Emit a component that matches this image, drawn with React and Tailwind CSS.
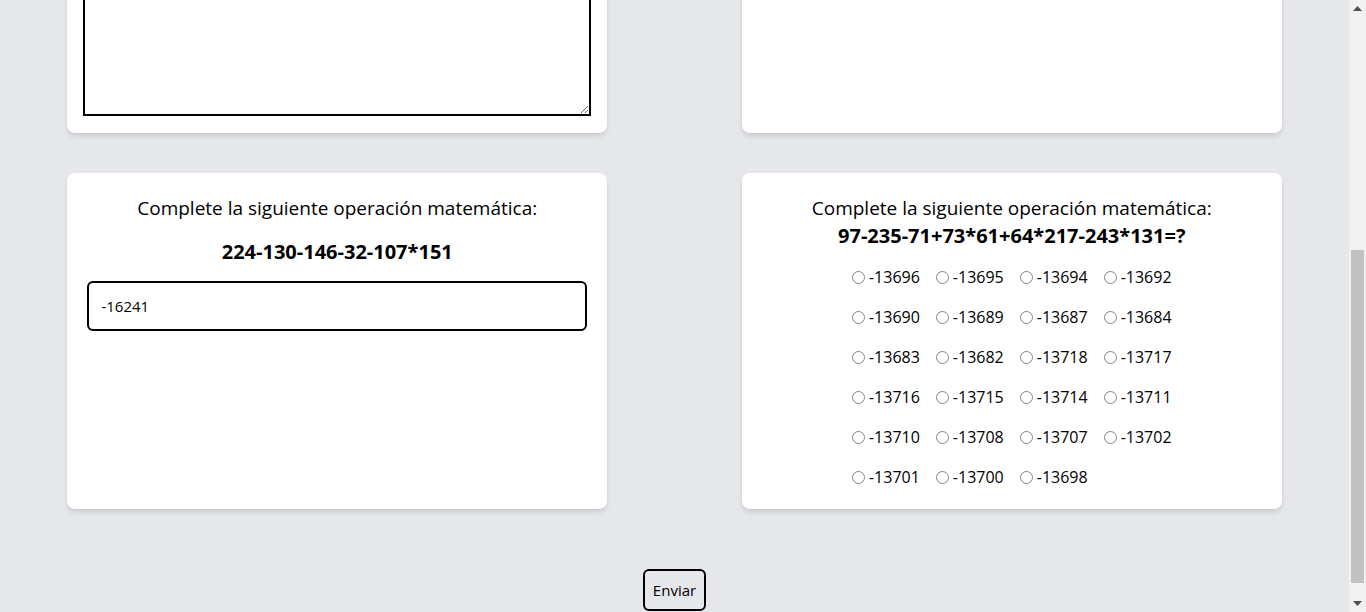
import React from 'react';

const options = [
  '-13696', '-13695', '-13694', '-13692',
  '-13690', '-13689', '-13687', '-13684',
  '-13683', '-13682', '-13718', '-13717',
  '-13716', '-13715', '-13714', '-13711',
  '-13710', '-13708', '-13707', '-13702',
  '-13701', '-13700', '-13698',
];

const Card = ({ className = '', children }) => (
  <div className={`w-2/5 bg-white rounded-lg shadow-md ${className}`}>{children}</div>
);

// window scrollbar, drawn since the page is shown scrolled
const Scrollbar = () => (
  <div className="w-[17px] h-[612px] flex flex-col bg-[#f1f1f1] shrink-0">
    <div className="h-[17px] flex items-center justify-center">
      <svg width="9" height="5" viewBox="0 0 9 5"><path d="M0 5 L4.5 0 L9 5 Z" fill="#505050" /></svg>
    </div>
    <div className="flex-1 pt-[233px]">
      <div className="h-[333px] mx-[2px] bg-[#c1c1c1]" />
    </div>
    <div className="h-[17px] flex items-center justify-center">
      <svg width="9" height="5" viewBox="0 0 9 5"><path d="M0 0 L9 0 L4.5 5 Z" fill="#505050" /></svg>
    </div>
  </div>
);

export default function App() {
  return (
    <div className="flex h-[612px] bg-[#e5e7eb] text-black font-['Open_Sans',sans-serif]">
      <div
        ref={(el) => {
          if (el) el.scrollTop = 428;
        }}
        className="flex-1 h-[612px] overflow-hidden"
      >
        <div className="flex flex-col pt-10 pb-[22px]">
          <div className="flex justify-around">
            <Card className="h-[521px] flex flex-col p-4 pt-12 pb-[17px]">
              <textarea className="flex-1 block w-full border-2 border-black resize-y" />
            </Card>
            <Card className="h-[521px] p-5" />
          </div>

          <div className="flex justify-around mt-10">
            <Card className="p-5 pt-[21px]">
              <h2 className="text-[19px] text-center leading-7">Complete la siguiente operación matemática:</h2>
              <p className="text-xl font-bold text-center leading-7 mt-4">224-130-146-32-107*151</p>
              <input
                type="text"
                defaultValue="-16241"
                className="mt-[15px] w-full h-[50px] border-2 border-black rounded-md px-3 text-[15px] outline-none"
              />
            </Card>
            <Card className="p-5 pt-[21px]">
              <h2 className="text-[19px] text-center leading-7">Complete la siguiente operación matemática:</h2>
              <p className="text-xl font-bold text-center leading-7">97-235-71+73*61+64*217-243*131=?</p>
              <div className="grid grid-cols-4 gap-x-4 gap-y-4 w-fit mx-auto mt-[15px]">
                {options.map((opt) => (
                  <label key={opt} className="flex items-center leading-6 text-base">
                    <input
                      type="radio"
                      name="op2"
                      className="appearance-none m-0 w-[13px] h-[13px] rounded-full border border-[#858585] bg-white"
                    />
                    <span className="ml-1">{opt}</span>
                  </label>
                ))}
              </div>
            </Card>
          </div>

          <div className="flex justify-center mt-[60px] mb-[1px]">
            <button className="border-2 border-black rounded-md px-2 h-[42px] text-[15px] leading-6">
              Enviar
            </button>
          </div>
        </div>
      </div>
      <Scrollbar />
    </div>
  );
}
